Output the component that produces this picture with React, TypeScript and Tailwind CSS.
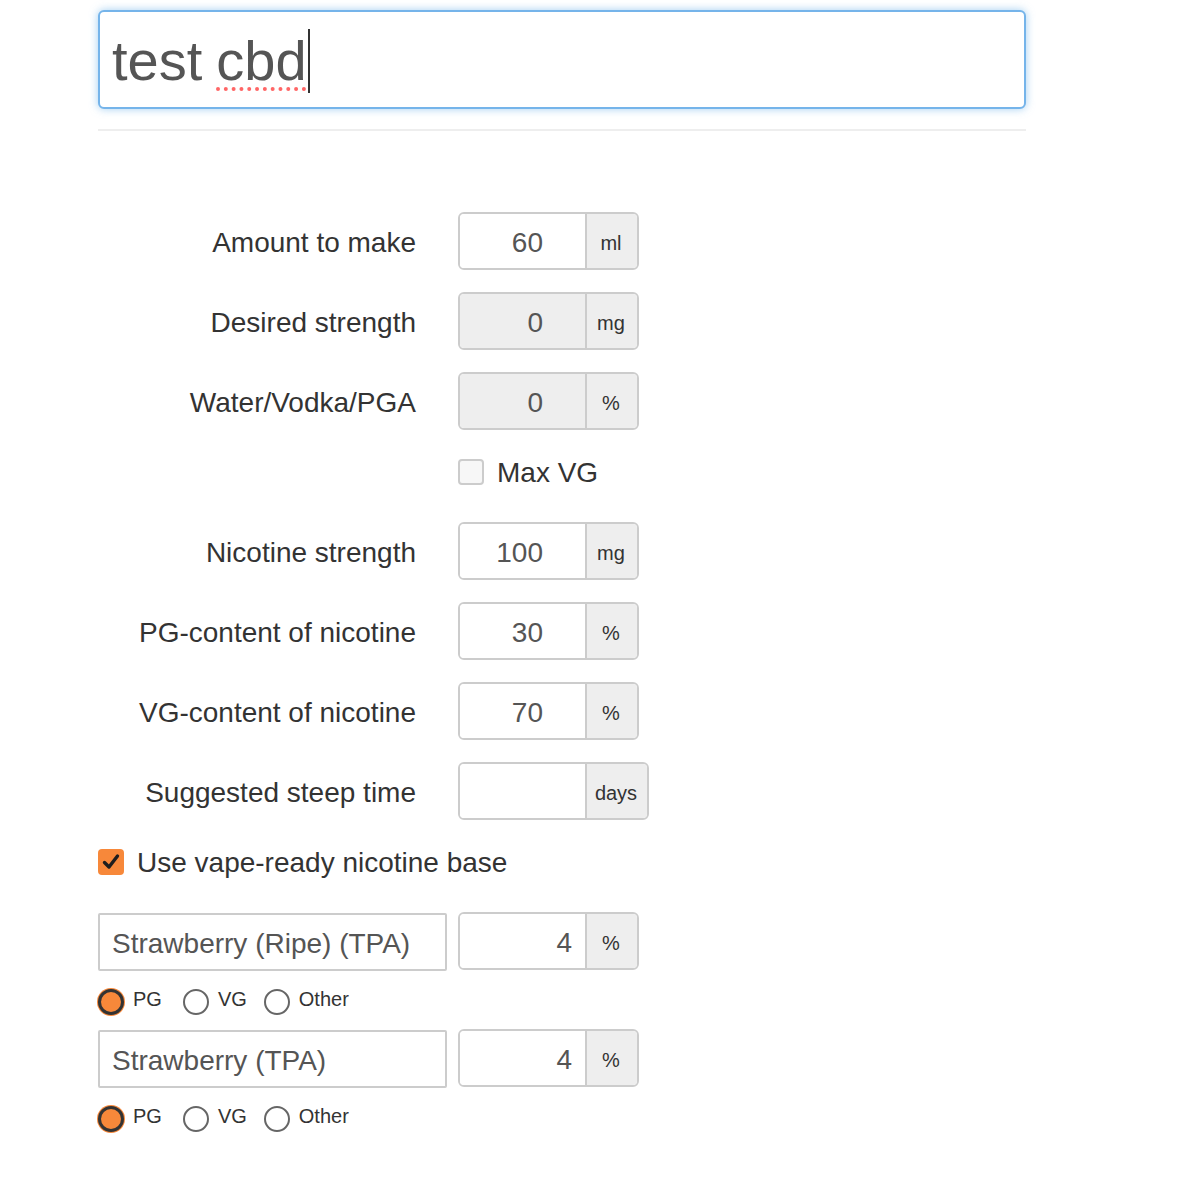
import * as React from "react";

const font = { fontFamily: '"Liberation Sans", Arial, sans-serif' };

interface GroupProps {
  value: string;
  unit: string;
  disabled?: boolean;
  wide?: boolean;
  flavor?: boolean;
}

const InputGroup: React.FC<GroupProps> = ({ value, unit, disabled, wide, flavor }) => {
  return (
    <div className="flex h-[58px] rounded-[6px] border-2 border-[#ccc] overflow-hidden">
      <div
        className={
          "w-[125px] flex items-center justify-end pt-[3px] text-[28px] text-[#555] " +
          (flavor ? "pr-[13px] " : "pr-[42px] ") +
          (disabled ? "bg-[#eee]" : "bg-white")
        }
      >
        {value}
      </div>
      <div
        className={
          "border-l-2 border-[#ccc] bg-[#eee] flex items-center justify-center pt-[3px] pr-[2px] text-[20px] text-[#333] " +
          (wide ? "w-[62px]" : "w-[52px]")
        }
      >
        {unit}
      </div>
    </div>
  );
};

const Row: React.FC<{ label: string; children: React.ReactNode; className?: string }> = ({
  label,
  children,
  className,
}) => (
  <div className={"flex items-center h-[58px] " + (className || "")}>
    <div className="w-[318px] pt-[3px] text-right text-[28px] text-[#333]">{label}</div>
    <div className="ml-[42px]">{children}</div>
  </div>
);

const Radio: React.FC<{ checked?: boolean; label: string; className?: string }> = ({
  checked,
  label,
  className,
}) => (
  <div className={"flex items-start " + (className || "")}>
    {checked ? (
      <div className="w-[26px] h-[26px] rounded-full bg-[#f7883a] border-[3px] border-[#333] shadow-[0_0_0_1px_#f7883a]" />
    ) : (
      <div className="w-[26px] h-[26px] rounded-full bg-white border-2 border-[#666]" />
    )}
    <span className="ml-[9px] -mt-[5px] text-[20px] text-[#333]">{label}</span>
  </div>
);

const Radios: React.FC = () => (
  <div className="flex items-start h-[26px]">
    <Radio checked label="PG" />
    <Radio label="VG" className="ml-[21px]" />
    <Radio label="Other" className="ml-[17px]" />
  </div>
);

const FlavorRow: React.FC<{ name: string; value: string }> = ({ name, value }) => (
  <div className="flex items-start">
    <div className="w-[349px] h-[58px] mt-[1px] border-2 border-[#ccc] rounded-[2px] bg-white flex items-center pt-[3px] pl-[12px] text-[28px] text-[#555]">
      {name}
    </div>
    <div className="ml-[11px]">
      <InputGroup value={value} unit="%" flavor />
    </div>
  </div>
);

const App: React.FC = () => {
  return (
    <div className="min-h-[1178px] bg-white pt-[10px] pl-[98px]" style={font}>
      <div className="w-[928px]">
        <div className="h-[99px] rounded-[6px] border-2 border-[#75b4ea] shadow-[0_0_8px_rgba(102,175,233,0.6)] bg-white flex items-center pl-[12px] pt-[2px] text-[56px] text-[#555]">
          <span>test </span>
          <span className="ml-[14px] underline decoration-dotted decoration-[#f66] decoration-[4px] underline-offset-[8px]">
            cbd
          </span>
          <span className="w-[2px] h-[64px] bg-[#333] ml-[1px]" />
        </div>
        <div className="h-[2px] bg-[#eee] mt-[20px]" />
      </div>

      <div className="mt-[81px]">
        <Row label="Amount to make">
          <InputGroup value="60" unit="ml" />
        </Row>
        <Row label="Desired strength" className="mt-[22px]">
          <InputGroup value="0" unit="mg" disabled />
        </Row>
        <Row label="Water/Vodka/PGA" className="mt-[22px]">
          <InputGroup value="0" unit="%" disabled />
        </Row>

        <div className="flex items-center h-[26px] mt-[29px] ml-[360px]">
          <div className="w-[26px] h-[26px] rounded-[4px] border-2 border-[#ccc] bg-[#f7f7f7]" />
          <span className="ml-[13px] pt-[2px] text-[28px] text-[#333]">Max VG</span>
        </div>

        <Row label="Nicotine strength" className="mt-[37px]">
          <InputGroup value="100" unit="mg" />
        </Row>
        <Row label="PG-content of nicotine" className="mt-[22px]">
          <InputGroup value="30" unit="%" />
        </Row>
        <Row label="VG-content of nicotine" className="mt-[22px]">
          <InputGroup value="70" unit="%" />
        </Row>
        <Row label="Suggested steep time" className="mt-[22px]">
          <InputGroup value="" unit="days" wide />
        </Row>

        <div className="flex items-center h-[26px] mt-[29px]">
          <div className="w-[26px] h-[26px] rounded-[4px] bg-[#f7883a] flex items-center justify-center">
            <svg width="20" height="20" viewBox="0 0 20 20">
              <path d="M3.5 10.5 L8 15 L16.5 4" fill="none" stroke="#1e1e1e" strokeWidth="3.4" strokeLinecap="round" strokeLinejoin="round" />
            </svg>
          </div>
          <span className="ml-[13px] pt-[2px] text-[28px] text-[#333]">Use vape-ready nicotine base</span>
        </div>

        <div className="mt-[37px]">
          <FlavorRow name="Strawberry (Ripe) (TPA)" value="4" />
        </div>
        <div className="mt-[18px]">
          <Radios />
        </div>
        <div className="mt-[14px]">
          <FlavorRow name="Strawberry (TPA)" value="4" />
        </div>
        <div className="mt-[18px]">
          <Radios />
        </div>
      </div>
    </div>
  );
};

export default App;
